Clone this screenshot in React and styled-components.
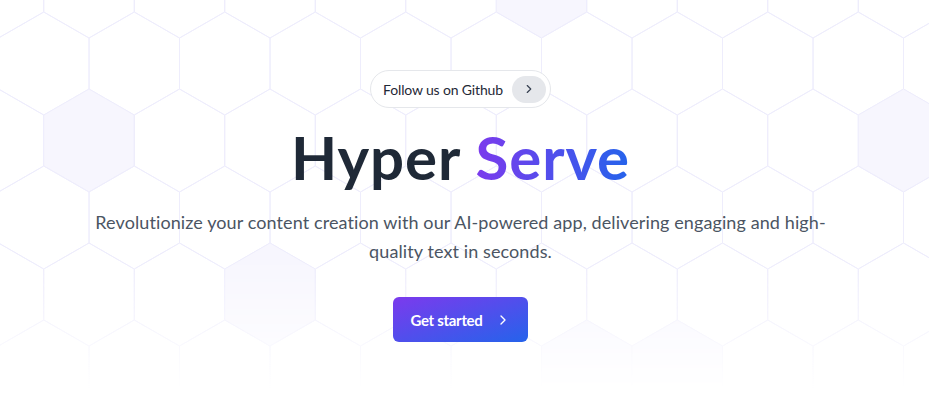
import React from "react";
import styled, { createGlobalStyle } from "styled-components";
import { ChevronRight } from "lucide-react";

const GlobalStyle = createGlobalStyle`
  html, body {
    margin: 0;
    padding: 0;
    background: #fff;
  }
  * {
    box-sizing: border-box;
  }
`;

// honeycomb geometry, measured from the reference
const HEX_W = 90.5;
const HEX_HALF = HEX_W / 2;
const HEX_SIDE = 25.5;
const HEX_TIP = 51.5;
const ROW_STEP = 77;

const filled = ["0:5", "2:0", "2:9", "4:2", "5:5", "5:6"];

const hexPoints = (cx, cy) =>
  [
    [cx, cy - HEX_TIP],
    [cx + HEX_HALF, cy - HEX_SIDE],
    [cx + HEX_HALF, cy + HEX_SIDE],
    [cx, cy + HEX_TIP],
    [cx - HEX_HALF, cy + HEX_SIDE],
    [cx - HEX_HALF, cy - HEX_SIDE],
  ]
    .map((p) => p.join(","))
    .join(" ");

const Honeycomb = () => {
  const hexes = [];
  for (let r = 0; r < 7; r++) {
    const cy = -13.5 + ROW_STEP * r;
    const start = r % 2 === 0 ? 89 : 89 + HEX_HALF;
    for (let k = -1; k < 11; k++) {
      const cx = start + HEX_W * k;
      hexes.push(
        <polygon
          key={`${r}-${k}`}
          points={hexPoints(cx, cy)}
          fill={filled.includes(`${r}:${k}`) ? "#f7f6fe" : "none"}
          stroke="#eeedfc"
          strokeWidth="1"
        />
      );
    }
  }
  return (
    <Backdrop width="929" height="415" viewBox="0 0 929 415" preserveAspectRatio="xMinYMin slice">
      {hexes}
    </Backdrop>
  );
};

const App = () => {
  return (
    <>
      <GlobalStyle />
      <Hero>
        <Honeycomb />
        <Content>
          <GithubPill href="#">
            Follow us on Github
            <PillArrow>
              <ChevronRight size={14} strokeWidth={2} />
            </PillArrow>
          </GithubPill>
          <Title>
            Hyper <Accent>Serve</Accent>
          </Title>
          <Lead>
            Revolutionize your content creation with our AI-powered app,
            delivering engaging and high-quality text in seconds.
          </Lead>
          <CtaButton href="#">
            Get started
            <ChevronRight size={16} strokeWidth={2} />
          </CtaButton>
        </Content>
      </Hero>
    </>
  );
};

const Hero = styled.section`
  position: relative;
  width: 100%;
  height: 415px;
  overflow: hidden;
  background: #fff;
  font-family: Lato, "Noto Sans", sans-serif;
`;

const Backdrop = styled.svg`
  position: absolute;
  inset: 0;
  width: 100%;
  height: 100%;
  -webkit-mask-image: linear-gradient(to bottom, #000 0%, #000 62%, transparent 94%);
  mask-image: linear-gradient(to bottom, #000 0%, #000 62%, transparent 94%);
`;

const Content = styled.div`
  position: relative;
  display: flex;
  flex-direction: column;
  align-items: center;
  padding: 70px 8px 0 0;
  text-align: center;
`;

const GithubPill = styled.a`
  display: inline-flex;
  align-items: center;
  gap: 9px;
  height: 38px;
  padding: 0 4px 0 12px;
  border: 1px solid #e5e7eb;
  border-radius: 999px;
  background: #fff;
  color: #1f2937;
  font-size: 14px;
  letter-spacing: -0.15px;
  text-decoration: none;
`;

const PillArrow = styled.span`
  display: inline-flex;
  align-items: center;
  justify-content: center;
  width: 34px;
  height: 27px;
  border-radius: 999px;
  background: #e5e7eb;
  color: #374151;
`;

const Title = styled.h1`
  margin: 16px 0 0;
  font-size: 60px;
  line-height: 66px;
  font-weight: 700;
  color: #1f2937;
  letter-spacing: 0.9px;
`;

const Accent = styled.span`
  background: linear-gradient(to right, #7c3aed, #2563eb);
  -webkit-background-clip: text;
  background-clip: text;
  color: transparent;
`;

const Lead = styled.p`
  max-width: 768px;
  margin: 18px 0 0;
  font-size: 18px;
  line-height: 29px;
  color: #4b5563;
  letter-spacing: 0.1px;
`;

const CtaButton = styled.a`
  display: inline-flex;
  align-items: center;
  gap: 12px;
  height: 45px;
  margin-top: 31px;
  padding: 0 17px;
  border-radius: 6px;
  background: linear-gradient(to bottom right, #7c3aed, #2563eb);
  color: #fff;
  font-size: 15px;
  font-weight: 700;
  letter-spacing: -0.3px;
  text-decoration: none;
`;

export default App;
